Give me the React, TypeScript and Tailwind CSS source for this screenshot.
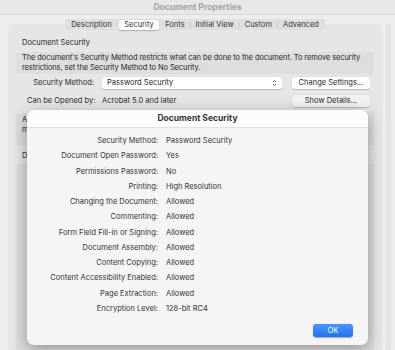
export default function App() {
  const rows: [string, string][] = [
    ["Security Method:", "Password Security"],
    ["Document Open Password:", "Yes"],
    ["Permissions Password:", "No"],
    ["Printing:", "High Resolution"],
    ["Changing the Document:", "Allowed"],
    ["Commenting:", "Allowed"],
    ["Form Field Fill-in or Signing:", "Allowed"],
    ["Document Assembly:", "Allowed"],
    ["Content Copying:", "Allowed"],
    ["Content Accessibility Enabled:", "Allowed"],
    ["Page Extraction:", "Allowed"],
    ["Encryption Level:", "128-bit RC4"],
  ];
  const tabs = ["Description", "Security", "Fonts", "Initial View", "Custom", "Advanced"];

  return (
    <div
      className="relative w-[395px] h-[350px] overflow-hidden bg-[#ededed] text-[#262626]"
      style={{ fontFamily: "Inter, 'Noto Sans', sans-serif" }}
    >
      {/* title bar */}
      <div className="h-[15px] border-b border-[#d9d9d9] bg-[#e8e8e8] flex items-center justify-center text-[8.5px] font-bold text-[#a3a3a3]">
        Document Properties
      </div>

      <div className="flex">
        <div className="flex-1 pl-[8px] pt-[9px]">
          {/* group box */}
          <div className="relative bg-[#e6e6e6] rounded-[5px] h-[340px] px-[8px] pt-[13px]">
            {/* tabs */}
            <div className="absolute -top-[5px] left-0 right-0 flex justify-center">
              <div className="flex items-center h-[11px] rounded-[3px] bg-[#dfdfdf] px-[1px] text-[7.5px] text-[#333]">
                {tabs.map((t, i) => (
                  <div key={t} className="flex items-center h-full">
                    {i > 2 && <div className="w-px h-[6px] bg-[#c8c8c8]" />}
                    {i === 1 && <div className="w-[2px]" />}
                    {i === 2 && <div className="w-[1px]" />}
                    <div
                      className={
                        t === "Security"
                          ? "h-[10px] px-[5.5px] flex items-center bg-white rounded-[2px] shadow-[0_0.5px_1px_rgba(0,0,0,0.25)]"
                          : "h-[10px] px-[5px] flex items-center"
                      }
                    >
                      {t}
                    </div>
                  </div>
                ))}
              </div>
            </div>

            <div className="text-[7.5px] pl-[6px] h-[12px] flex items-center">Document Security</div>
            <div className="mt-[3px] bg-[#dedede] rounded-[3px] pl-[6px] pr-[1px] py-[1px] text-[7.5px] leading-[10px] tracking-[-0.1px] whitespace-nowrap">
              The document's Security Method restricts what can be done to the document. To remove security
              <br />
              restrictions, set the Security Method to No Security.
            </div>

            <div className="flex items-center mt-[2px] h-[14px] text-[7.5px]">
              <div className="w-[86px] text-right pr-[8px]">Security Method:</div>
              <div className="w-[180px] h-[12px] bg-white rounded-[3px] shadow-[0_0.5px_1px_rgba(0,0,0,0.2)] flex items-center justify-between px-[5px]">
                <span>Password Security</span>
                <svg width="5" height="8" viewBox="0 0 5 8" fill="none" stroke="#555" strokeWidth="0.9">
                  <path d="M1 3 L2.5 1.5 L4 3" />
                  <path d="M1 5 L2.5 6.5 L4 5" />
                </svg>
              </div>
              <div className="ml-[10px] w-[78px] h-[12px] bg-white rounded-[3px] shadow-[0_0.5px_1px_rgba(0,0,0,0.2)] flex items-center justify-center">
                Change Settings...
              </div>
            </div>

            <div className="flex items-center mt-[4px] h-[14px] text-[7.5px]">
              <div className="w-[86px] pl-[11px]">Can be Opened by:</div>
              <div className="w-[180px]">Acrobat 5.0 and later</div>
              <div className="ml-[10px] w-[78px] h-[12px] bg-[#f2f2f2] rounded-[3px] shadow-[0_0.5px_1px_rgba(0,0,0,0.2)] flex items-center justify-center">
                Show Details...
              </div>
            </div>

            <div className="mt-[5px] bg-[#dedede] rounded-[3px] px-[6px] py-[2px] text-[7.5px] leading-[10px] h-[33px]">
              A
              <br />m
            </div>
            <div className="text-[7.5px] pl-[6px] h-[16px] flex items-center mt-[2px]">D</div>
            <div className="bg-[#dedede] rounded-[3px] h-[200px]" />
          </div>
        </div>
        <div className="w-[13px] flex justify-center">
          <div className="w-[5px] h-[340px] mt-[9px] bg-[#e4e4e4]" />
        </div>
      </div>

      {/* modal */}
      <div className="absolute left-[27px] top-[110px] w-[341px] h-[235px] rounded-[7px] bg-[#f5f5f5] shadow-[0_4px_16px_rgba(0,0,0,0.35)] overflow-hidden flex flex-col">
        <div className="h-[18px] bg-[#fcfcfc] border-b border-[#e2e2e2] flex items-center justify-center text-[8.5px] font-bold text-[#333]">
          Document Security
        </div>
        <div className="pt-[5px] flex flex-col text-[7.5px] text-[#333]">
          {rows.map(([k, v]) => (
            <div key={k} className="flex items-center h-[15.27px]">
              <div className="w-[131px] text-right">{k}</div>
              <div className="pl-[8px]">{v}</div>
            </div>
          ))}
        </div>
        <div className="flex-1" />
        <div className="flex justify-end pr-[15px] pb-[8px]">
          <div className="w-[40px] h-[13px] rounded-[3px] bg-gradient-to-b from-[#4a96ff] to-[#1f73f0] text-white text-[7.5px] flex items-center justify-center shadow-[0_0.5px_1px_rgba(0,0,0,0.3)]">
            OK
          </div>
        </div>
      </div>
    </div>
  );
}
